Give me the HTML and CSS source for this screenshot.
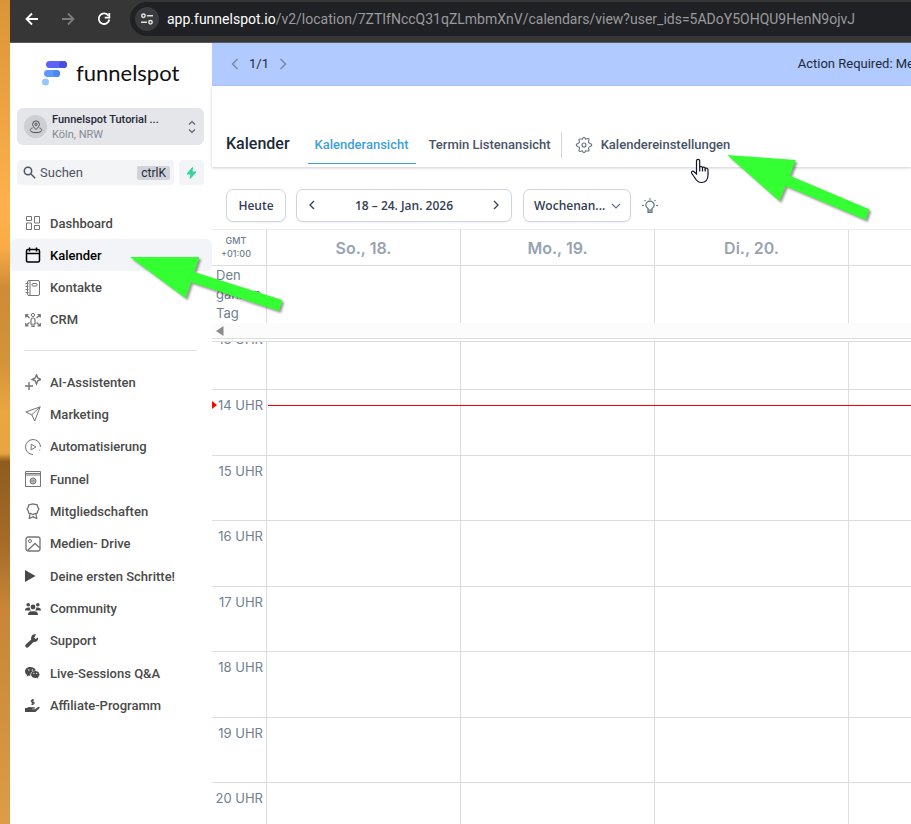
FILE: index.html
```html
<!DOCTYPE html>
<html lang="de">
<head>
    <meta charset="UTF-8">
    <meta name="viewport" content="width=device-width, initial-scale=1.0">
    <title>Kalender - funnelspot</title>
    <link rel="stylesheet" href="styles.css">
</head>
<body>
    <div class="desktop">
        <div class="browser">
            <div class="browser-bar">
                <button class="nav-btn" aria-label="Zurück">
                    <svg width="14" height="14" viewBox="0 0 14 14" fill="none" stroke="#fff" stroke-width="1.8"><path d="M13 7H2M7 1.5 1.5 7 7 12.5"/></svg>
                </button>
                <button class="nav-btn" aria-label="Vorwärts">
                    <svg width="14" height="14" viewBox="0 0 14 14" fill="none" stroke="#7d7d7d" stroke-width="1.8"><path d="M1 7h11M7 1.5 12.5 7 7 12.5"/></svg>
                </button>
                <button class="nav-btn" aria-label="Neu laden">
                    <svg width="14" height="14" viewBox="0 0 14 14" fill="none" stroke="#fff" stroke-width="1.8"><path d="M11.5 3.8A5.3 5.3 0 1 0 12.3 7.5"/><path d="M12.3 1v4.6H7.7"/></svg>
                </button>
                <div class="address">
                    <span class="site-info">
                        <svg width="14" height="14" viewBox="0 0 14 14" fill="none" stroke="#e3e3e3" stroke-width="1.5"><circle cx="3.5" cy="3.8" r="1.7"/><path d="M7 3.8h6M1 10.2h6"/><circle cx="10.5" cy="10.2" r="1.7"/></svg>
                    </span>
                    <span class="url"><b>app.funnelspot.io</b>/v2/location/7ZTIfNccQ31qZLmbmXnV/calendars/view?user_ids=5ADoY5OHQU9HenN9ojvJ</span>
                </div>
            </div>

            <div class="app">
                <aside class="sidebar">
                    <div class="logo">
                        <svg width="26" height="26" viewBox="0 0 26 26">
                            <rect x="4" y="1" width="21" height="7" rx="3.5" fill="#5b63fa"/>
                            <rect x="17" y="1" width="8" height="7" rx="3.5" fill="#4650dc"/>
                            <rect x="2" y="10" width="16" height="7" rx="3.5" fill="#5c98fb"/>
                            <rect x="11" y="10" width="7" height="7" rx="3.5" fill="#4a87ee"/>
                            <circle cx="3.5" cy="22" r="3.5" fill="#93c9fd"/>
                        </svg>
                        <span>funnelspot</span>
                    </div>

                    <button class="location">
                        <span class="location-pin">
                            <svg width="14" height="14" viewBox="0 0 14 14" fill="none" stroke="#4b4f56" stroke-width="1"><path d="M7 9.5C5 7.5 3.6 6 3.6 4.3a3.4 3.4 0 0 1 6.8 0C10.4 6 9 7.5 7 9.5z"/><circle cx="7" cy="4.3" r="1.2"/><path d="M3.5 8C.8 8.7.8 10.5 2 11.5c2 1.5 8 1.5 10 0 1.2-1 1.2-2.8-1.500-3.500"/></svg>
                        </span>
                        <span class="location-text">
                            <strong>Funnelspot Tutorial ...</strong>
                            <small>Köln, NRW</small>
                        </span>
                        <svg width="8" height="14" viewBox="0 0 8 14" fill="none" stroke="#5f6470" stroke-width="1.2"><path d="M1 4.500 4 1.500l3 3M1 9.500l3 3 3-3"/></svg>
                    </button>

                    <div class="search-row">
                        <div class="search">
                            <svg width="13" height="13" viewBox="0 0 13 13" fill="none" stroke="#4b5563" stroke-width="1.5"><circle cx="5" cy="5" r="3.7"/><path d="m8 8 4.2 4.2"/></svg>
                            <input type="text" placeholder="Suchen" aria-label="Suchen">
                            <kbd>ctrlK</kbd>
                        </div>
                        <button class="bolt" aria-label="Schnellaktionen">
                            <svg width="11" height="12" viewBox="0 0 11 12" fill="#34d399"><path d="M6.500.5 1 7h4l-.8 4.500L10 5H6z" stroke="#34d399" stroke-linejoin="round"/></svg>
                        </button>
                    </div>

                    <nav>
                        <ul class="menu menu-main">
                            <li><a href="#"><svg viewBox="0 0 16 16"><path d="M1.500 1.500h5v4h-5zM1.500 8h5v6.500h-5zM9.500 1.500h5V8h-5zM9.500 10.500h5v4h-5z"/></svg>Dashboard</a></li>
                            <li><a href="#" class="active"><svg viewBox="0 0 16 16"><rect x="1.5" y="2.5" width="13" height="12.5" rx="1.5"/><path d="M1.500 6.500h13M4.500.5v4M11.500.5v4"/></svg>Kalender</a></li>
                            <li><a href="#"><svg viewBox="0 0 16 16"><rect x="2.5" y=".5" width="12" height="15" rx="1.5"/><path d="M5 .5v15M.5 3.500h3M.5 6.500h3M.5 9.500h3M.5 12.500h3"/><rect x="7" y="3.5" width="5" height="2.5" rx="1"/></svg>Kontakte</a></li>
                            <li><a href="#"><svg viewBox="0 0 16 16"><circle cx="8" cy="3" r="1.6"/><path d="M6 12V8a2 2 0 0 1 4 0v4H9v2.500H7V12zM4.500 6 1 3M.7 5.500V2.700h2.800M11.500 6 15 3M12.500 2.700h2.800v2.800M4.500 10.500 1 13.500M.7 11v2.800h2.800M11.500 10.500l3.500 3M12.500 13.800h2.800V11" stroke-width="1.2"/></svg>CRM</a></li>
                        </ul>
                        <hr>
                        <ul class="menu menu-more">
                            <li><a href="#"><svg viewBox="0 0 16 16"><path d="M11.500.8 12.800 4l3 1.500-3 1.300L11.500 10l-1.300-3.200-3-1.300 3-1.500zM4 8v8M0 12h8" stroke-width="1.4"/></svg>AI-Assistenten</a></li>
                            <li><a href="#"><svg viewBox="0 0 16 16"><path d="M15.200.8.8 6l6 2.800L9.700 15zM6.800 8.800l8.400-8"/></svg>Marketing</a></li>
                            <li><a href="#"><svg viewBox="0 0 16 16"><path d="M8 15.500A7.500 7.500 0 1 1 15.500 8M15 10.500l-.5 1"/><path d="M6.200 5.200 11 8l-4.800 2.800z"/></svg>Automatisierung</a></li>
                            <li><a href="#"><svg viewBox="0 0 16 16"><path d="M.5.5h15v15H.5zM.5 4h15M.5 2.500h15"/><circle cx="8" cy="10" r="3"/><path d="M5 10h6M8 7v6M6.800 7.500v5M9.200 7.500v5" stroke-width=".7"/></svg>Funnel</a></li>
                            <li><a href="#"><svg viewBox="0 0 16 16"><path d="M8 .8 10 1.300 12.200 1.900 12.800 4.200 13.900 6 12.800 7.900 12.200 10.100 10 10.700 8 11.500 6 10.700 3.800 10.100 3.200 7.900 2.100 6 3.200 4.200 3.800 1.900 6 1.300z" stroke-width="1.3"/><path d="m5 11-.8 4.500L8 13.800l3.800 1.700L11 11" stroke-width="1.3"/></svg>Mitgliedschaften</a></li>
                            <li><a href="#"><svg viewBox="0 0 16 16"><rect x="1" y="1" width="14" height="14" rx="2" stroke-width="1.3"/><circle cx="5" cy="5" r="1.5"/><path d="m2.500 14.500 7.500-7 5 4.500" stroke-width="1.3"/></svg>Medien- Drive</a></li>
                            <li><a href="#"><svg class="solid" viewBox="0 0 16 16"><path d="M0 2v12l10.500-6z"/></svg>Deine ersten Schritte!</a></li>
                            <li><a href="#"><svg class="solid" viewBox="0 0 16 16"><circle cx="3.2" cy="3.7" r="1.8"/><circle cx="12.8" cy="3.7" r="1.8"/><circle cx="8" cy="6" r="2.4"/><path d="M0 9.500c0-2.500 1.500-3.300 4.800-3A4 4 0 0 0 6 9.500zM16 9.500c0-2.500-1.500-3.300-4.800-3A4 4 0 0 1 10 9.500zM3 14c0-2.600 1.200-3.700 3.500-3.700h3c2.300 0 3.500 1.100 3.500 3.700z"/></svg>Community</a></li>
                            <li><a href="#"><svg class="solid" viewBox="0 0 16 16"><path d="M12.800 4.600 10.500 6 9.200 4.700l1.400-2.400.4-.9C8 .7 5.500 3 6.200 6.500L.8 11.400c-1.800 2 .9 4.600 2.700 2.700l5-5.200C11.500 9.500 14 7 12.800 4.600z"/></svg>Support</a></li>
                            <li><a href="#"><svg class="solid" viewBox="0 0 16 16"><path d="M5.500 2C2.300 2 0 4 0 6.500 0 8 .9 9.300 2 10l-.5 1.700L3.600 10.600l1.700.3C5 8 7 5.500 10.800 5.400 10.200 3.400 8 2 5.500 2zM3.800 4.300a.7.7 0 1 1 0 1.400.7.7 0 0 1 0-1.400zm3.500 0a.7.7 0 1 1 0 1.400.7.7 0 0 1 0-1.400z"/><path d="M10.300 6C7.900 6 6 7.600 6 9.500S7.900 13 10.300 13l1.400-.2 1.600.9-.4-1.500c1-.6 1.600-1.600 1.600-2.700C14.500 7.600 12.700 6 10.300 6zM8.900 7.800a.6.600 0 1 1 0 1.200.6.600 0 0 1 0-1.200zm2.800 0a.6.600 0 1 1 0 1.200.6.600 0 0 1 0-1.200z"/></svg>Live-Sessions Q&amp;A</a></li>
                            <li><a href="#"><svg class="solid" viewBox="0 0 16 16"><path d="M0 10h2c1-1 2.500-1.300 4-.8h3.500c.8.300.5 1.500-.5 1.500H7v.5h3l3.200-2.300c1-.5 2 .5 1.200 1.400L11 13.500c-.5.400-1 .5-1.600.5H0z"/><path d="M9 2H7.300a1 1 0 0 0 0 2.100h.8a1 1 0 0 1 0 2.100H6.300M7.700 1v6" fill="none" stroke="#4a4a4a" stroke-width="1.1"/></svg>Affiliate-Programm</a></li>
                        </ul>
                    </nav>
                </aside>

                <main class="content">
                    <div class="banner">
                        <div class="pager">
                            <button aria-label="Vorherige"><svg width="8" height="12" viewBox="0 0 8 12" fill="none" stroke="#7b89a8" stroke-width="1.5"><path d="M6.500 1 1.500 6l5 5"/></svg></button>
                            <span>1/1</span>
                            <button aria-label="Nächste"><svg width="8" height="12" viewBox="0 0 8 12" fill="none" stroke="#7b89a8" stroke-width="1.5"><path d="m1.500 1 5 5-5 5"/></svg></button>
                        </div>
                        <span class="banner-text">Action Required: Me</span>
                    </div>

                    <header class="page-head">
                        <h1>Kalender</h1>
                        <a href="#" class="tab selected">Kalenderansicht</a>
                        <a href="#" class="tab">Termin Listenansicht</a>
                        <a href="#" class="tab settings">
                            <svg width="18" height="18" viewBox="0 0 18 18" fill="none" stroke="#667080" stroke-width="1.1" stroke-linejoin="round"><path d="M7.300 3.200Q9 -.8 10.700 3.200Q14.900 1.500 13.900 4.400Q12.600 6.600 14.800 7.300Q18.800 9 14.800 10.700Q12.700 11.400 14.100 14.100Q14 15.500 10.700 14.800Q9 18.800 7.300 14.800Q3.100 16.500 4.100 13.600Q5.400 11.400 3.200 10.700Q-.8 9 3.200 7.300Q5.300 6.600 3.900 3.900Q4 2.500 7.300 3.200z"/><circle cx="9" cy="9" r="2"/></svg>
                            Kalendereinstellungen
                        </a>
                    </header>

                    <div class="toolbar">
                        <button class="box today">Heute</button>
                        <div class="box range">
                            <button aria-label="Vorherige Woche"><svg width="6" height="10" viewBox="0 0 6 10" fill="none" stroke="#344054" stroke-width="1.3"><path d="M5 1 1 5l4 4"/></svg></button>
                            <span>18 – 24. Jan. 2026</span>
                            <button aria-label="Nächste Woche"><svg width="6" height="10" viewBox="0 0 6 10" fill="none" stroke="#344054" stroke-width="1.3"><path d="m1 1 4 4-4 4"/></svg></button>
                        </div>
                        <div class="view">
                            <select class="box" aria-label="Ansicht">
                                <option>Wochenan...</option>
                            </select>
                            <svg width="10" height="6" viewBox="0 0 10 6" fill="none" stroke="#667085" stroke-width="1.2"><path d="m1 1 4 4 4-4"/></svg>
                        </div>
                        <button class="hint" aria-label="Tipps">
                            <svg width="16" height="16" viewBox="0 0 16 16" fill="none" stroke="#56707a" stroke-width="1.2"><path d="M6 12v-1.500C4.500 9.800 3.800 8.700 3.800 7.300a4.200 4.200 0 0 1 8.400 0c0 1.400-.7 2.500-2.200 3.200V12z"/><path d="M6 13h4v1.500H6zM8 .2v1.500M2.500 2.200l1 1M13.500 2.200l-1 1M0 7.500h1.800M14.200 7.500H16"/></svg>
                        </button>
                    </div>

                    <div class="calendar">
                        <div class="week day-names">
                            <div class="zone">GMT<br>+01:00</div>
                            <div>So., 18.</div>
                            <div>Mo., 19.</div>
                            <div>Di., 20.</div>
                            <div></div>
                        </div>
                        <div class="week all-day">
                            <div class="all-day-label">Den ganzen Tag</div>
                            <div></div>
                            <div></div>
                            <div></div>
                            <div></div>
                        </div>
                        <div class="scroll-strip">
                            <svg width="8" height="10" viewBox="0 0 8 10" fill="#8b8b8b"><path d="M7.500 0v10L0 5z"/></svg>
                        </div>
                        <div class="hours">
                            <div class="hours-inner">
                                <div class="week hour"><div>13 UHR</div><div></div><div></div><div></div><div></div></div>
                                <div class="week hour now"><div>14 UHR</div><div></div><div></div><div></div><div></div></div>
                                <div class="week hour"><div>15 UHR</div><div></div><div></div><div></div><div></div></div>
                                <div class="week hour"><div>16 UHR</div><div></div><div></div><div></div><div></div></div>
                                <div class="week hour"><div>17 UHR</div><div></div><div></div><div></div><div></div></div>
                                <div class="week hour"><div>18 UHR</div><div></div><div></div><div></div><div></div></div>
                                <div class="week hour"><div>19 UHR</div><div></div><div></div><div></div><div></div></div>
                                <div class="week hour"><div>20 UHR</div><div></div><div></div><div></div><div></div></div>
                            </div>
                        </div>
                    </div>
                </main>
            </div>
        </div>

        <svg class="arrow arrow-menu" width="170" height="70" viewBox="0 0 170 70"><path fill="#33ff33" d="M10 7 79.300 7 74.300 22 162.300 50 159 61 71 32.300 65.700 48.300z"/></svg>
        <svg class="arrow arrow-settings" width="160" height="80" viewBox="0 0 160 80"><path fill="#33ff33" d="M7.300 5 75.700 10 70 25.700 149.300 59.300 145.700 70 65.700 36 59.300 51z"/></svg>
        <svg class="pointer" width="19" height="26" viewBox="0 0 19 26"><path d="M6.500 16V3a1.500 1.500 0 0 1 3.200 0v6.500c.3-1.500 2.800-1.200 2.800.4.500-1.300 2.700-.8 2.700.7.600-.9 2.800-.5 2.800 1.300V17c0 5-2.500 7.500-6.500 7.500-3.500 0-5-1.500-6.500-4.500L1.500 15c-.6-1.500 1.500-2.700 2.800-1z" fill="#fff" stroke="#15152a" stroke-width="1.2"/><path d="M9.700 9v4.500M12.500 10v3.500M15.200 11v2.500" stroke="#15152a" stroke-width="1.2"/></svg>
    </div>
</body>
</html>
```
FILE: styles.css
```css
* {
    box-sizing: border-box;
}
body {
    margin: 0;
    font-family: Roboto, sans-serif;
    font-size: 13px;
    color: #344054;
}
button {
    padding: 0;
    border: none;
    background: none;
    font: inherit;
    color: inherit;
    cursor: pointer;
}
a {
    color: inherit;
    text-decoration: none;
}
svg {
    flex: none;
}
.desktop {
    position: relative;
    height: 100vh;
    padding-left: 10px;
    overflow: hidden;
    background: linear-gradient(#d99538 0%, #ffb04c 25%, #fbab46 30%, #cd8c35 35%, #d39338 44%, #eaa63f 50%, #e8a440 55%, #8f5c1c 56%, #a56c28 66%, #c88636 74%, #d3933f 90%, #dc9c48 100%);
}
.browser {
    display: flex;
    flex-direction: column;
    height: 100%;
    background-color: #fff;
}

/* browser bar */
.browser-bar {
    display: flex;
    align-items: center;
    height: 43px;
    padding: 0 0 5px 15px;
    background-color: #363636;
    border-bottom: 1px solid #5a5a5a;
}
.nav-btn {
    display: flex;
    margin-right: 22px;
}
.address {
    display: flex;
    align-items: center;
    flex: 1;
    height: 34px;
    margin-left: -3px;
    padding-left: 5px;
    border-radius: 17px 0 0 17px;
    background-color: #202124;
    overflow: hidden;
}
.site-info {
    display: flex;
    align-items: center;
    justify-content: center;
    width: 24px;
    height: 24px;
    margin-right: 8px;
    border-radius: 50%;
    background-color: #3a3b3d;
}
.url {
    font-size: 14px;
    color: #9a9b9e;
    white-space: nowrap;
}
.url b {
    font-weight: 400;
    color: #fff;
}

.app {
    display: flex;
    flex: 1;
    min-height: 0;
}

/* sidebar */
.sidebar {
    flex: none;
    width: 202px;
}
.logo {
    display: flex;
    align-items: center;
    gap: 8px;
    height: 65px;
    padding: 0 0 6px 32px;
    font-family: Lato, sans-serif;
    font-size: 22px;
    color: #111;
}
.location {
    display: flex;
    align-items: center;
    width: 187px;
    height: 37px;
    margin-left: 7px;
    padding: 0 8px 0 7px;
    border-radius: 6px;
    background-color: #e4e6ea;
    text-align: left;
}
.location-pin {
    display: flex;
    align-items: center;
    justify-content: center;
    width: 23px;
    height: 23px;
    margin-right: 5px;
    border-radius: 50%;
    background-color: #cdcfd2;
}
.location-text {
    flex: 1;
    line-height: 15px;
}
.location-text strong,
.location-text small {
    display: block;
    font-size: 11px;
    font-weight: 500;
    color: #1f2937;
}
.location-text small {
    font-weight: 400;
    color: #858a93;
}
.search-row {
    display: flex;
    gap: 5px;
    margin: 15px 8px 22px 7px;
}
.search {
    display: flex;
    align-items: center;
    flex: 1;
    min-width: 0;
    height: 25px;
    padding: 0 4px 0 6px;
    border-radius: 4px;
    background-color: #f3f4f6;
}
.search input {
    flex: 1;
    min-width: 0;
    padding: 0 0 0 4px;
    border: none;
    background: none;
    font: inherit;
    outline: none;
}
.search input::placeholder {
    color: #4b5563;
}
.search kbd {
    padding: 0 4px;
    border-radius: 2px;
    background-color: #d0d3da;
    font-family: inherit;
    font-size: 12px;
    line-height: 14px;
    color: #1f2937;
}
.bolt {
    display: flex;
    align-items: center;
    justify-content: center;
    width: 25px;
    border-radius: 4px;
    background-color: #f3f4f6;
}
.menu {
    display: grid;
    grid-auto-rows: 1fr;
    margin: 0;
    padding: 0;
    list-style: none;
}
.menu-main {
    height: 129px;
}
.menu-more {
    height: 356px;
}
.menu a {
    display: flex;
    align-items: center;
    gap: 9px;
    height: 32px;
    padding-left: 15px;
    border-radius: 6px;
    font-weight: 500;
    color: #4a4a4a;
}
.menu .active {
    background-color: #f2f4f7;
    color: #000;
}
.menu svg {
    width: 16px;
    height: 16px;
    fill: none;
    stroke: #757575;
}
.menu .active svg {
    stroke: #000;
    stroke-width: 1.5;
}
.menu .solid {
    fill: #4a4a4a;
    stroke: none;
}
.sidebar hr {
    margin: 14px 15px 15px 14px;
    border: none;
    border-top: 1px solid #e2e2e2;
}

/* content */
.content {
    display: flex;
    flex-direction: column;
    flex: 1;
    min-width: 0;
}
.banner {
    display: flex;
    align-items: center;
    justify-content: space-between;
    height: 43px;
    padding: 0 0 2px 19px;
    background-color: #b1caff;
    color: #1f2937;
    overflow: hidden;
}
.banner-text {
    margin-right: -3px;
}
.pager {
    display: flex;
    align-items: center;
    gap: 10px;
}
.pager button {
    display: flex;
}
.page-head {
    display: flex;
    align-items: flex-end;
    height: 81px;
    padding: 0 14px 3px;
    box-shadow: 0 1px 3px rgba(0, 0, 0, 0.2);
    color: #475467;
}
.page-head h1 {
    margin: 0 18px 0 0;
    font-size: 16px;
    font-weight: 500;
    line-height: 40px;
    color: #1d2939;
}
.tab {
    margin-right: 6px;
    padding: 0 7px;
    border-bottom: 1px solid transparent;
    font-weight: 500;
    line-height: 36px;
    white-space: nowrap;
}
.tab.selected {
    border-color: #3f9fd8;
    color: #3f9fd8;
}
.settings {
    display: flex;
    align-items: center;
    gap: 8px;
    margin-left: -3px;
    padding-left: 14px;
    background: linear-gradient(#d0d5dd, #d0d5dd) left center / 1px 26px no-repeat;
}
.toolbar {
    display: flex;
    align-items: center;
    height: 62px;
    padding: 15px 14px 0;
    font-family: "Open Sans", sans-serif;
    font-size: 12px;
    font-weight: 600;
}
.box {
    height: 33px;
    margin-right: 10px;
    border: 1px solid #d0d5dd;
    border-radius: 7px;
    background-color: #fff;
    box-shadow: 0 1px 2px rgba(16, 24, 40, 0.06);
    color: #344054;
}
.today {
    width: 60px;
}
.range {
    display: flex;
    align-items: center;
    justify-content: space-between;
    width: 216px;
    padding: 0 12px;
}
.view {
    position: relative;
    width: 109px;
    margin-right: 11px;
}
.view select {
    width: 108px;
    margin-left: 1px;
    padding: 0 10px;
    appearance: none;
    font: inherit;
}
.view svg {
    position: absolute;
    top: 14px;
    right: 10px;
    pointer-events: none;
}
.hint {
    display: flex;
}

/* calendar */
.calendar {
    display: flex;
    flex-direction: column;
    flex: 1;
    min-height: 0;
    overflow: hidden;
    border-top: 1px solid #eaecf0;
    font-family: Inter, sans-serif;
}
.week {
    display: grid;
    grid-template-columns: 55px repeat(4, 194px);
}
.week > div {
    border-right: 1px solid #ddd;
}
.day-names {
    height: 36px;
    border-bottom: 1px solid #ddd;
    font-size: 16px;
    font-weight: 600;
    line-height: 36px;
    text-align: center;
    color: #98a2b3;
}
.day-names .zone {
    padding: 4px 6px 0 0;
    font-size: 9px;
    font-weight: 500;
    line-height: 13px;
    color: #708090;
}
.all-day {
    height: 57px;
    color: #708090;
}
.all-day-label {
    padding-left: 4px;
    line-height: 19px;
}
.scroll-strip {
    display: flex;
    align-items: center;
    height: 16px;
    padding-left: 4px;
    border-bottom: 1px solid #ddd;
    background-color: #fcfcfc;
}
.hours {
    flex: 1;
    min-height: 0;
    margin-top: 2px;
    overflow: hidden;
    border-top: 1px solid #ddd;
}
.hours-inner {
    margin-top: -18px;
}
.hour {
    height: 65px;
    border-bottom: 1px solid #ddd;
    color: #708090;
}
.hour:nth-child(even),
.hour:first-child {
    height: 66px;
}
.hour > div:first-child {
    padding: 7px 3px 0 0;
    line-height: 16px;
    text-align: right;
}
.now {
    position: relative;
}
.now::before {
    content: "";
    position: absolute;
    top: 11px;
    left: 0;
    border: 4px solid transparent;
    border-left: 5px solid #f00;
    border-right: none;
}
.now::after {
    content: "";
    position: absolute;
    top: 15px;
    right: 0;
    left: 56px;
    height: 1px;
    background-color: #f00;
}

/* markers over the page */
.arrow {
    position: absolute;
    filter: drop-shadow(2px 2px 1px rgba(0, 0, 0, 0.4));
}
.arrow-menu {
    top: 250px;
    left: 120px;
}
.arrow-settings {
    top: 150px;
    left: 720px;
}
.pointer {
    position: absolute;
    top: 158px;
    left: 690px;
}
```
